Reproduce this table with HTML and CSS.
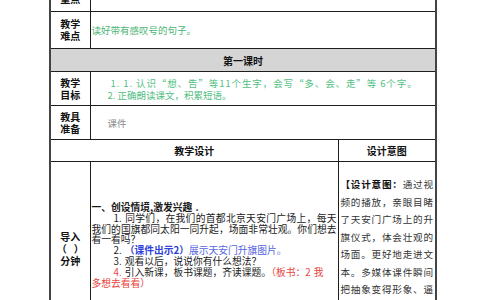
FILE: index.html
```html
<!DOCTYPE html>
<html lang="zh-CN">
<head>
<meta charset="utf-8">
<title>教学设计</title>
<link rel="stylesheet" href="styles.css">
</head>
<body>
<div class="page">
<table class="plan">
  <colgroup>
    <col class="c-label">
    <col class="c-main">
    <col class="c-note">
  </colgroup>
  <tr class="r-key">
    <th class="label">教学<br>重点</th>
    <td colspan="2" class="green"></td>
  </tr>
  <tr class="r-hard">
    <th class="label">教学<br>难点</th>
    <td colspan="2" class="green hard">读好带有感叹号的句子。</td>
  </tr>
  <tr class="r-lesson">
    <th colspan="3" class="lesson">第一课时</th>
  </tr>
  <tr class="r-goal">
    <th class="label">教学<br>目标</th>
    <td colspan="2" class="green goal">
      <p class="g1">1. 1. 认识“想、告”等11个生字，会写“多、会、走”等 6个字。</p>
      <p class="g2">2. 正确朗读课文，积累短语。</p>
    </td>
  </tr>
  <tr class="r-prep">
    <th class="label">教具<br>准备</th>
    <td colspan="2" class="gray prep">课件</td>
  </tr>
  <tr class="r-head">
    <th colspan="2" class="head">教学设计</th>
    <th class="head">设计意图</th>
  </tr>
  <tr class="r-body">
    <th class="label stage">导入<br>（&nbsp;&nbsp;&nbsp;）<br>分钟</th>
    <td class="main">
      <p class="step">一、创设情境,激发兴趣 .</p>
      <p class="para">1. 同学们，在我们的首都北京天安门广场上，每天我们的国旗都同太阳一同升起，场面非常壮观。你们想去看一看吗？</p>
      <p class="para gap">2. <b class="blue-b">（课件出示2）</b><span class="blue">展示天安门升旗图片。</span></p>
      <p class="para">3. 观看以后，说说你有什么想法？</p>
      <p class="para"><span class="red">4.</span> 引入新课，板书课题，齐读课题。<span class="red">（板书：2 我<br>多想去看看）</span></p>
    </td>
    <td class="note">
      <p><b>【设计意图：</b>通过视频的播放，亲眼目睹了天安门广场上的升旗仪式，体会壮观的场面。更好地走进文本。多媒体课件瞬间把抽象变得形象、逼真，激发了学生的学习兴趣。】</p>
    </td>
  </tr>
</table>
</div>
</body>
</html>
```

FILE: styles.css
```css
html, body {
  margin: 0;
  padding: 0;
  overflow: hidden;
  background: #ffffff;
}

.page {
  padding-left: 49px;
  margin-top: -26px;
}

.plan {
  border-collapse: collapse;
  table-layout: fixed;
  width: 386px;
  font-family: "Noto Sans CJK SC", "Noto Sans", sans-serif;
  font-size: 9.5px;
  color: #222;
  border-left: 2px solid #444;
  border-right: 2px solid #444;
}

.c-label { width: 40px; }
.c-main { width: 248px; }
.c-note { width: 98px; }

.plan th,
.plan td {
  border: 1px solid #1e1e1e;
  padding: 0;
}

.plan p {
  margin: 0;
}

.plan .label {
  font-weight: bold;
  font-size: 10px;
  line-height: 12px;
  text-align: center;
  vertical-align: middle;
  color: #111;
}

.r-key { height: 37px; }
.r-hard { height: 37px; }
.r-lesson { height: 23px; }
.r-goal { height: 34px; }
.r-prep { height: 34px; }
.r-head { height: 22px; }
.r-body { height: 170px; }

.green { color: #4bb575; }
.gray { color: #8a8a8a; }

.plan .hard {
  padding-left: 1px;
  vertical-align: middle;
}

.plan .lesson {
  background: #d5d5d5;
  font-weight: bold;
  font-size: 10px;
  text-align: center;
  vertical-align: middle;
  color: #111;
}

.plan .goal {
  vertical-align: middle;
  line-height: 12px;
  color: #52c083;
}

.goal .g1 { padding-left: 20px; letter-spacing: 0.9px; }
.goal .g2 { padding-left: 17px; }

.plan .prep {
  padding-left: 17px;
  vertical-align: middle;
}

.plan .head {
  font-weight: bold;
  font-size: 10px;
  text-align: center;
  vertical-align: middle;
  color: #111;
}

.plan .stage {
  vertical-align: top;
  padding-top: 69px;
}

.plan .main {
  vertical-align: top;
  padding: 40px 1px 0 1px;
  line-height: 10.8px;
  font-size: 9.75px;
  word-spacing: 1px;
  text-align: justify;
  color: #1a1a1a;
}

.step { font-weight: bold; }

.para { text-indent: 22px; }
.gap { margin-top: 6px; }

.blue-b { color: #2f3fd8; }
.blue { color: #5566e0; }
.red { color: #e8443c; }

.plan .note {
  vertical-align: top;
  padding: 14px 2px 0 2px;
  font-size: 9.6px;
  line-height: 17.5px;
  text-align: justify;
  color: #333;
}

.note b { color: #111; }
```
